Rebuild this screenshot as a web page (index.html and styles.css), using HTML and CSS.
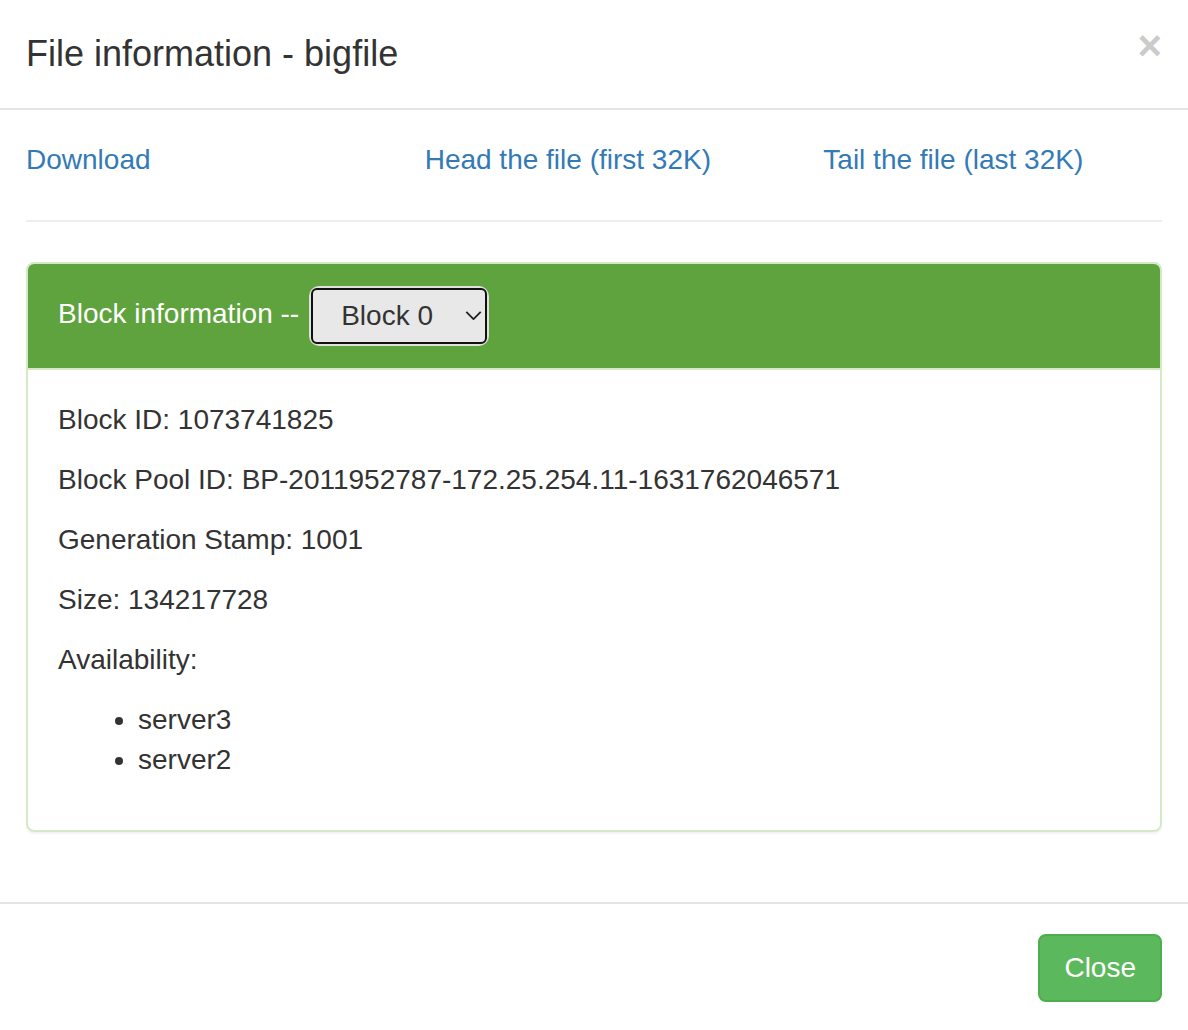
FILE: index.html
```html
<!DOCTYPE html>
<html>
<head>
<meta charset="utf-8">
<title>File information - bigfile</title>
<link rel="stylesheet" href="styles.css">
</head>
<body>
<div class="modal">
  <div class="modal-header">
    <button class="close" type="button">&times;</button>
    <h4 class="modal-title">File information - bigfile</h4>
  </div>
  <div class="modal-body">
    <div class="links">
      <a href="#">Download</a>
      <a href="#">Head the file (first 32K)</a>
      <a href="#">Tail the file (last 32K)</a>
    </div>
    <hr class="divider">
    <div class="panel">
      <div class="panel-heading">
        <span class="heading-text">Block information --</span>
        <div class="select-wrap">
          <select class="block-select">
            <option>Block 0</option>
          </select>
          <svg class="chevron" width="18" height="10" viewBox="0 0 18 10"><path d="M1 1 L9 9 L17 1" fill="none" stroke="#222" stroke-width="2"/></svg>
        </div>
      </div>
      <div class="panel-body">
        <p>Block ID: 1073741825</p>
        <p>Block Pool ID: BP-2011952787-172.25.254.11-1631762046571</p>
        <p>Generation Stamp: 1001</p>
        <p>Size: 134217728</p>
        <p>Availability:</p>
        <ul>
          <li>server3</li>
          <li>server2</li>
        </ul>
      </div>
    </div>
  </div>
  <div class="modal-footer">
    <button class="btn-success" type="button">Close</button>
  </div>
</div>
</body>
</html>
```
FILE: styles.css
```css
html, body {
  margin: 0;
  padding: 0;
  background: #fff;
}
body {
  font-family: "Liberation Sans", Arial, sans-serif;
  font-size: 28px;
  line-height: 40px;
  color: #333;
}
.modal {
  width: 1188px;
}
.modal-header {
  padding: 28px 26px 29px;
  border-bottom: 2px solid #e5e5e5;
}
.modal-title {
  margin: 0;
  font-size: 36px;
  line-height: 51px;
  font-weight: normal;
  color: #333;
}
.close {
  float: right;
  margin-top: -3px;
  margin-right: 0;
  padding: 0;
  border: 0;
  background: transparent;
  font-family: "Liberation Sans", Arial, sans-serif;
  font-size: 42px;
  font-weight: bold;
  line-height: 1;
  color: #000;
  opacity: 0.2;
  cursor: pointer;
}
.modal-body {
  padding: 30px 26px;
}
.links {
  display: grid;
  grid-template-columns: repeat(3, 1fr);
  column-gap: 60px;
}
.links a {
  color: #337ab7;
  text-decoration: none;
}
.divider {
  margin: 40px 0;
  border: 0;
  border-top: 2px solid #eee;
  height: 0;
}
.panel {
  border: 2px solid #d6e9c6;
  border-radius: 8px;
  box-shadow: 0 2px 2px rgba(0, 0, 0, 0.05);
  margin-bottom: 40px;
}
.panel-heading {
  display: flex;
  align-items: center;
  gap: 12px;
  height: 64px;
  padding: 20px 30px;
  background: #5fa33e;
  color: #fff;
  border-bottom: 2px solid #d6e9c6;
  border-radius: 6px 6px 0 0;
}
.heading-text {
  margin-bottom: 4px;
}
.select-wrap {
  position: relative;
  border-radius: 8px;
  box-shadow: 0 0 0 2px #e0e0e0;
}
.block-select {
  display: block;
  appearance: none;
  -webkit-appearance: none;
  width: 176px;
  height: 56px;
  margin: 0;
  padding: 0 0 0 28px;
  border: 2px solid #111;
  border-radius: 6px;
  background: #e8e8e8;
  color: #333;
  font-family: "Liberation Sans", Arial, sans-serif;
  font-size: 28px;
  line-height: 40px;
  outline: none;
}
.chevron {
  position: absolute;
  right: 5px;
  top: 23px;
  width: 17px;
  height: 9px;
  pointer-events: none;
}
.panel-body {
  padding: 30px;
}
.panel-body p {
  margin: 0 0 20px;
}
.panel-body ul {
  margin: 0 0 20px;
  padding-left: 80px;
}
.modal-footer {
  padding: 30px 26px;
  border-top: 2px solid #e5e5e5;
  text-align: right;
}
.btn-success {
  padding: 12px 24px;
  border: 2px solid #4cae4c;
  border-radius: 8px;
  background: #5cb85c;
  color: #fff;
  font-family: "Liberation Sans", Arial, sans-serif;
  font-size: 28px;
  line-height: 40px;
  cursor: pointer;
}
```
